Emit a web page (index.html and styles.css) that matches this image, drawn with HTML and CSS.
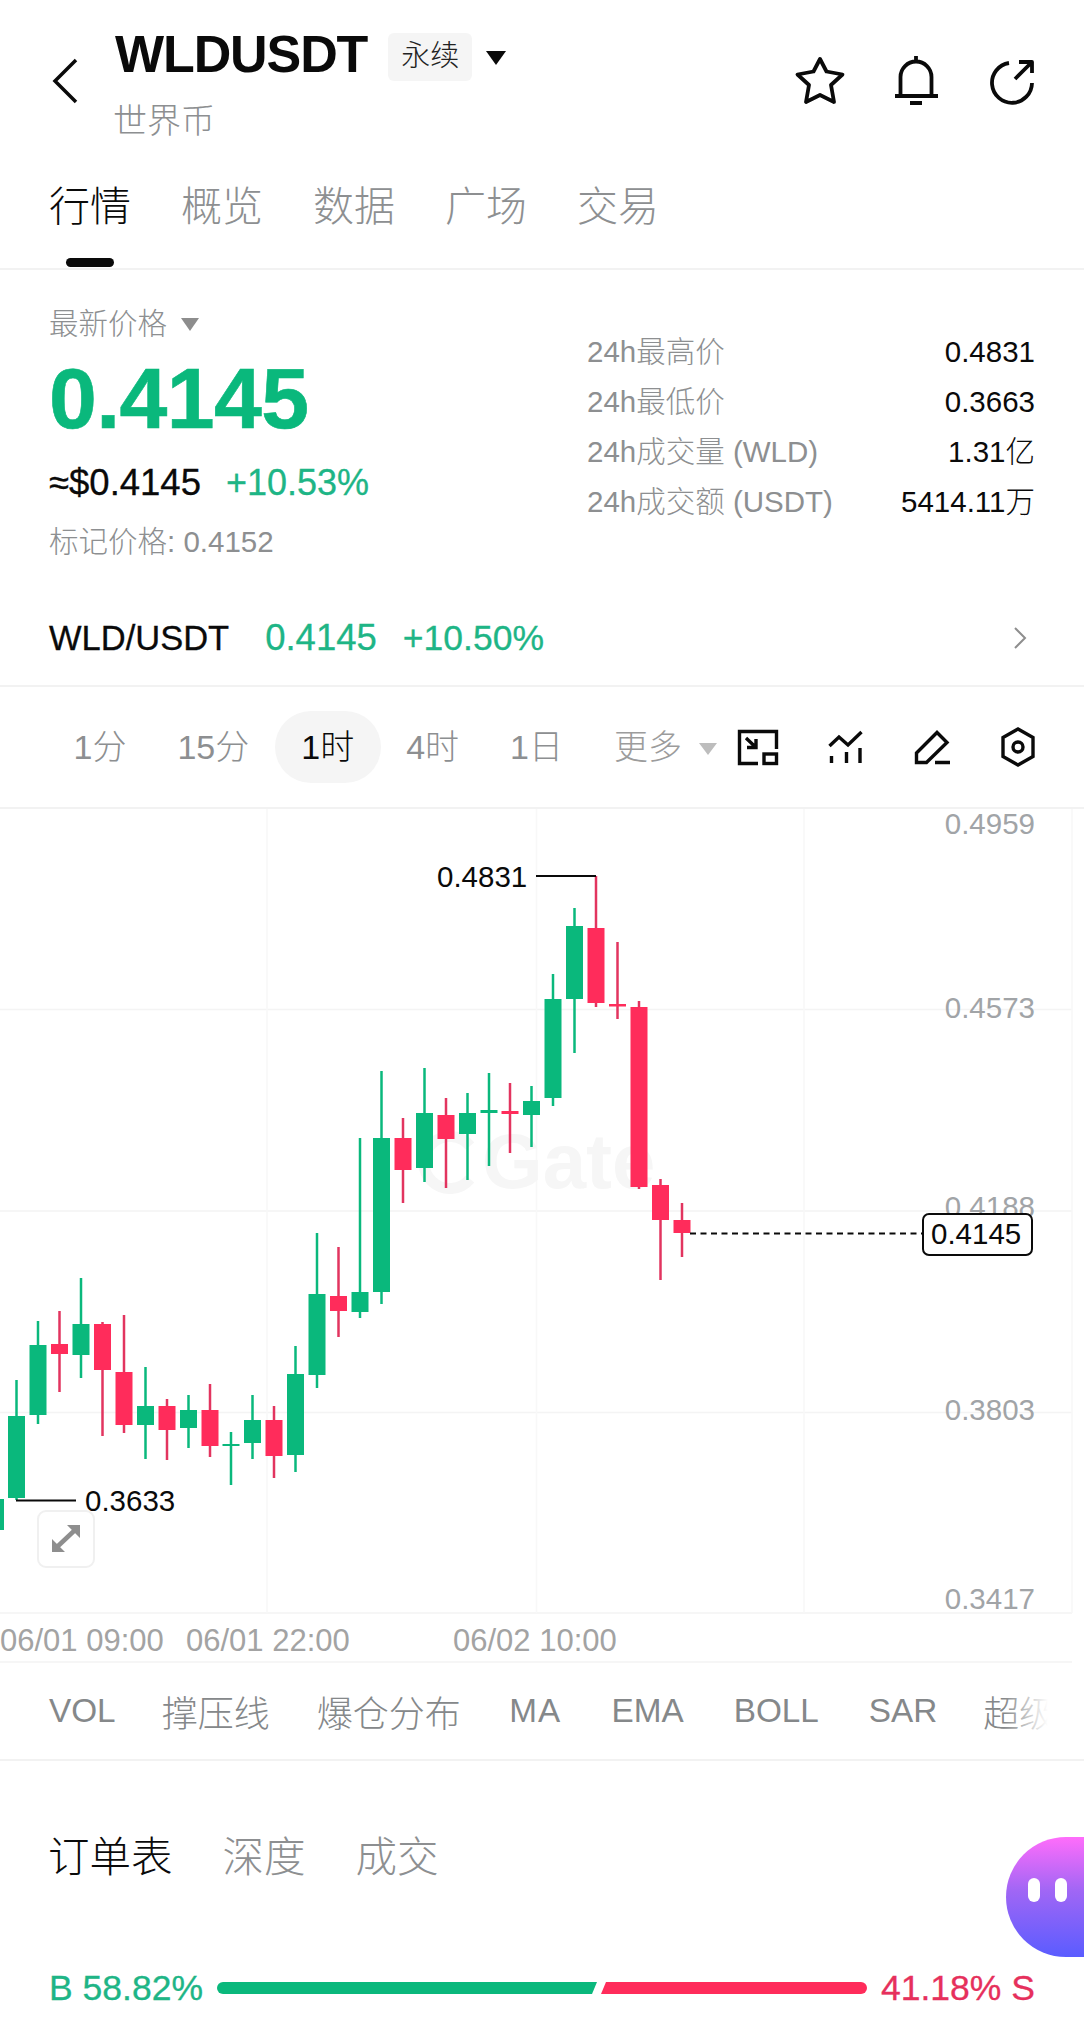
FILE: index.html
```html
<!DOCTYPE html>
<html lang="zh-CN">
<head>
    <meta charset="UTF-8">
    <meta name="viewport" content="width=device-width, initial-scale=1.0">
    <title>WLDUSDT 永续</title>
    <link rel="stylesheet" href="styles.css">
</head>
<body>
    <header class="topbar">
        <svg class="back" viewBox="0 0 26 46"><path d="M24 2 3 23l21 21"/></svg>
        <div class="pair">
            <div class="pair-line">
                <h1>WLDUSDT</h1>
                <span class="badge">永续</span>
                <span class="caret caret-dark"></span>
            </div>
            <p class="pair-name">世界币</p>
        </div>
        <div class="top-icons">
            <svg class="icon" viewBox="0 0 50 50"><path d="M25 3l6.5 12.5 16 3L36 29l3 17-14-7-14 7 3-17L2.500 18.500l16-3z"/></svg>
            <svg class="icon" viewBox="0 0 50 50"><path d="M9.500 40V21a15.500 15.500 0 0 1 31 0v19M4 40h43M25 0v5M19 47h12"/></svg>
            <svg class="icon" viewBox="0 0 50 50"><path d="M22 7a20 20 0 1 0 23 20M28 23 45 6M32 6h13v11"/></svg>
        </div>
    </header>

    <nav class="tabs">
        <a class="tab active">行情</a>
        <a class="tab">概览</a>
        <a class="tab">数据</a>
        <a class="tab">广场</a>
        <a class="tab">交易</a>
    </nav>

    <section class="stats">
        <div class="stats-left">
            <div class="price-label">最新价格 <span class="caret caret-grey"></span></div>
            <div class="price">0.4145</div>
            <div class="price-sub"><span class="usd">≈$0.4145</span><span class="change">+10.53%</span></div>
            <div class="mark">标记价格: 0.4152</div>
        </div>
        <dl class="stats-right">
            <div class="stat"><dt>24h最高价</dt><dd>0.4831</dd></div>
            <div class="stat"><dt>24h最低价</dt><dd>0.3663</dd></div>
            <div class="stat"><dt>24h成交量 (WLD)</dt><dd>1.31亿</dd></div>
            <div class="stat"><dt>24h成交额 (USDT)</dt><dd>5414.11万</dd></div>
        </dl>
    </section>

    <section class="spot">
        <span class="spot-name">WLD/USDT</span>
        <span class="spot-price">0.4145</span>
        <span class="spot-change">+10.50%</span>
        <svg class="spot-arrow" viewBox="0 0 14 24"><path d="M2 2l10 10L2 22"/></svg>
    </section>

    <section class="toolbar">
        <div class="frames">
            <a class="frame">1分</a>
            <a class="frame">15分</a>
            <a class="frame active"><b>1</b>时</a>
            <a class="frame">4时</a>
            <a class="frame">1日</a>
            <a class="frame more">更多<span class="caret caret-light"></span></a>
        </div>
        <div class="tools">
            <svg class="tool tool-resize" viewBox="0 0 42 37"><path d="M39.500 20V2.500h-37v32H21M9 9l10 9.500M19 10v8.500h-9"/><rect x="27" y="25" width="12.500" height="9.500"/></svg>
            <svg class="tool tool-indicator" viewBox="0 0 36 34"><path d="M1.500 16 11 7l9 8L33.500 2M3.500 26v7M18.500 22v11M32 18v15"/></svg>
            <svg class="tool tool-draw" viewBox="0 0 38 37"><path d="M3.500 33.500V24L24 3.500l10 10-20.500 20zM22 33.500h15"/></svg>
            <svg class="tool tool-settings" viewBox="0 0 36 40"><path d="M18 2l15 8.500v19L18 38 3 29.500v-19z"/><circle cx="18" cy="20" r="5"/></svg>
        </div>
    </section>

    <!-- viewBox uses page coordinates so candles can be read straight off the chart -->
    <svg class="chart" viewBox="0 809 1084 854">
        <g class="grid">
            <path d="M0 1009.500H1072M0 1211H1072M0 1412.500H1072M0 1613H1072M0 1662H1072"/>
            <path class="grid-v" d="M267 809V1613M536.500 809V1613M804 809V1613M1072 809V1613"/>
        </g>

        <g class="watermark">
            <path class="watermark-ring" d="M470 1146a26 26 0 1 0 0 33"/>
            <text x="482" y="1188">Gate</text>
        </g>

        <text class="axis" x="1035" y="833.500">0.4959</text>
        <text class="axis" x="1035" y="1017.500">0.4573</text>
        <text class="axis" x="1035" y="1217">0.4188</text>
        <text class="axis" x="1035" y="1419.500">0.3803</text>
        <text class="axis" x="1035" y="1608.500">0.3417</text>

        <text class="date" x="0" y="1651">06/01 09:00</text>
        <text class="date" x="186" y="1651">06/01 22:00</text>
        <text class="date" x="453" y="1651">06/02 10:00</text>

        <g class="up">
            <rect x="-13" y="1499" width="17" height="31"/>
            <path d="M16.500 1380V1500"/><rect x="8" y="1416" width="17" height="82"/>
            <path d="M38 1321V1424"/><rect x="29.500" y="1345" width="17" height="70"/>
            <path d="M81 1278V1378"/><rect x="72.500" y="1324" width="17" height="31"/>
            <path d="M145.500 1367V1459"/><rect x="137" y="1406" width="17" height="19"/>
            <path d="M188.500 1395V1448"/><rect x="180" y="1410" width="17" height="18"/>
            <path d="M231 1432V1485"/><rect x="222.500" y="1444" width="17" height="2"/>
            <path d="M252.500 1395V1459"/><rect x="244" y="1420" width="17" height="23"/>
            <path d="M295.500 1346V1472"/><rect x="287" y="1374" width="17" height="81"/>
            <path d="M317 1233V1388"/><rect x="308.500" y="1294" width="17" height="81"/>
            <path d="M360 1138V1318"/><rect x="351.500" y="1292" width="17" height="20"/>
            <path d="M381.500 1071V1304"/><rect x="373" y="1138" width="17" height="154"/>
            <path d="M424.500 1068V1182"/><rect x="416" y="1113" width="17" height="55"/>
            <path d="M467.500 1093V1180"/><rect x="459" y="1113" width="17" height="21"/>
            <path d="M489 1073V1166"/><rect x="480.500" y="1110" width="17" height="3"/>
            <path d="M531.500 1086V1147"/><rect x="523" y="1101" width="17" height="14"/>
            <path d="M553 974V1106"/><rect x="544.500" y="999" width="17" height="99"/>
            <path d="M574.500 908V1053"/><rect x="566" y="926" width="17" height="73"/>
        </g>
        <g class="down">
            <path d="M59.500 1311V1392"/><rect x="51" y="1344" width="17" height="10"/>
            <path d="M102.500 1322V1436"/><rect x="94" y="1324" width="17" height="46"/>
            <path d="M124 1315V1433"/><rect x="115.500" y="1372" width="17" height="53"/>
            <path d="M167 1399V1460"/><rect x="158.500" y="1406" width="17" height="24"/>
            <path d="M210 1384V1457"/><rect x="201.500" y="1410" width="17" height="36"/>
            <path d="M274 1406V1478"/><rect x="265.500" y="1420" width="17" height="36"/>
            <path d="M338.500 1247V1337"/><rect x="330" y="1296" width="17" height="15"/>
            <path d="M403 1118V1203"/><rect x="394.500" y="1138" width="17" height="32"/>
            <path d="M446 1098V1188"/><rect x="437.500" y="1115" width="17" height="24"/>
            <path d="M510 1083V1153"/><rect x="501.500" y="1111" width="17" height="3"/>
            <path d="M596 876V1007"/><rect x="587.500" y="928" width="17" height="75"/>
            <path d="M617.500 942V1019"/><rect x="609" y="1004" width="17" height="2.500"/>
            <path d="M639 1001V1189"/><rect x="630.500" y="1007" width="17" height="180"/>
            <path d="M660.500 1179V1280"/><rect x="652" y="1185" width="17" height="35"/>
            <path d="M682 1203V1257"/><rect x="673.500" y="1220" width="17" height="13"/>
        </g>

        <path class="marker" d="M536 876H596M16 1500.500H76"/>
        <text class="marker-text" x="437" y="886.500">0.4831</text>
        <text class="marker-text" x="85" y="1510.500">0.3633</text>

        <path class="last-line" d="M690 1233.500H922"/>
        <rect class="last-tag" x="923" y="1214" width="109" height="41" rx="6"/>
        <text class="marker-text" x="931" y="1243.500">0.4145</text>

        <rect class="expand" x="38" y="1511" width="56" height="56" rx="8"/>
        <path class="expand-line" d="M57 1547 75 1530"/>
        <path class="expand-head" d="M67 1525H80V1538zM52 1539V1552H65z"/>
    </svg>

    <section class="indicators">
        <span class="vol">VOL</span>
        <span class="cn">撑压线</span>
        <span class="cn">爆仓分布</span>
        <span class="ma">MA</span>
        <span>EMA</span>
        <span>BOLL</span>
        <span>SAR</span>
        <span class="cn last">超级趋势</span>
        <div class="indicators-fade"></div>
    </section>

    <section class="book">
        <div class="book-tabs">
            <a class="book-tab active">订单表</a>
            <a class="book-tab">深度</a>
            <a class="book-tab">成交</a>
        </div>
        <div class="ratio">
            <span class="ratio-buy">B 58.82%</span>
            <div class="ratio-bar">
                <div class="ratio-green"></div>
                <div class="ratio-red"></div>
            </div>
            <span class="ratio-sell">41.18% S</span>
        </div>
    </section>

    <div class="assistant">
        <span class="eye"></span>
        <span class="eye"></span>
    </div>
</body>
</html>
```

FILE: styles.css
```css
/* Couleurs */
:root {
  --green: #0ab87c;
  --green-text: #1eb586;
  --red: #ff2c5b;
  --red-text: #e6305c;
  --grey: #8d8f91;
  --line: #f2f2f2;
}
* {
  box-sizing: border-box;
}
html, body {
  margin: 0;
  padding: 0;
}
body {
  position: relative;
  width: 1084px;
  height: 2028px;
  overflow: hidden;
  background: #fff;
  color: #0a0a0a;
  font-family: "Liberation Sans", "Noto Sans CJK SC", sans-serif;
  font-weight: 300;
}
a {
  display: block;
  white-space: nowrap;
}

/* Triangles */
.caret {
  display: inline-block;
  width: 0;
  height: 0;
  border-left: 10px solid transparent;
  border-right: 10px solid transparent;
}
.caret-dark {
  border-top: 14px solid #0a0a0a;
}
.caret-grey {
  margin-left: 6px;
  border-left-width: 9px;
  border-right-width: 9px;
  border-top: 13px solid #8d8d8d;
  vertical-align: 3px;
}
.caret-light {
  margin-left: 17px;
  border-left-width: 9px;
  border-right-width: 9px;
  border-top: 12px solid #bdbdbd;
  vertical-align: 4px;
}

/* En-tete */
.topbar {
  display: flex;
  height: 140px;
  padding: 24px 47px 0 52px;
}
.back {
  width: 26px;
  height: 46px;
  margin-top: 34px;
  fill: none;
  stroke: #0a0a0a;
  stroke-width: 3.5;
}
.pair {
  margin-left: 37px;
}
.pair-line {
  display: flex;
  align-items: center;
  height: 60px;
}
h1 {
  margin: 0;
  font-size: 52px;
  font-weight: 700;
  letter-spacing: -1.1px;
}
.badge {
  width: 84px;
  height: 48px;
  margin: 5px 0 0 21px;
  border-radius: 6px;
  background: #f5f5f5;
  font-size: 29px;
  line-height: 46px;
  text-align: center;
  color: #222;
}
.pair-line .caret {
  margin: 7px 0 0 14px;
}
.pair-name {
  margin: 17px 0 0 -2px;
  font-size: 34px;
  line-height: 40px;
  color: var(--grey);
}
.top-icons {
  display: flex;
  gap: 46px;
  margin: 32px 0 0 auto;
}
.icon {
  width: 50px;
  height: 50px;
  overflow: visible;
  fill: none;
  stroke: #0a0a0a;
  stroke-width: 3.8;
  stroke-linejoin: round;
}

/* Onglets */
.tabs {
  display: flex;
  gap: 50px;
  height: 130px;
  padding: 42px 0 0 49px;
  border-bottom: 2px solid var(--line);
}
.tab {
  position: relative;
  width: 82px;
  font-size: 41px;
  line-height: 50px;
  color: var(--grey);
}
.tab.active {
  color: #0a0a0a;
}
.tab.active::after {
  content: "";
  position: absolute;
  left: 17px;
  top: 76px;
  width: 48px;
  height: 9px;
  border-radius: 5px;
  background: #0a0a0a;
}

/* Prix */
.stats {
  display: flex;
  height: 321px;
  padding: 34px 49px 0 49px;
}
.stats-left {
  width: 538px;
}
.price-label {
  font-size: 29.5px;
  line-height: 40px;
  color: var(--grey);
}
.price {
  margin-top: 9px;
  font-size: 86px;
  font-weight: 700;
  line-height: 90px;
  letter-spacing: -0.6px;
  color: var(--green);
  -webkit-text-stroke: 0.6px var(--green);
}
.price-sub {
  display: flex;
  gap: 25px;
  margin-top: 20px;
  line-height: 40px;
  -webkit-text-stroke: 0.3px;
}
.usd {
  font-size: 36.5px;
}
.change {
  font-size: 36px;
  color: var(--green-text);
}
.mark {
  margin-top: 19px;
  font-size: 29.5px;
  line-height: 40px;
  color: var(--grey);
}
.stats-right {
  flex: 1;
  margin: 23px 0 0;
}
.stat {
  display: flex;
  justify-content: space-between;
  height: 50px;
  font-size: 29.5px;
  line-height: 50px;
}
dt {
  color: var(--grey);
}
dd {
  margin: 0;
}

/* Spot */
.spot {
  display: flex;
  align-items: center;
  height: 96px;
  padding: 0 57px 0 49px;
  border-bottom: 2px solid var(--line);
  -webkit-text-stroke: 0.3px;
}
.spot-name {
  font-size: 34.5px;
}
.spot-price {
  margin-left: 36px;
  font-size: 36.5px;
  color: var(--green-text);
}
.spot-change {
  margin-left: 26px;
  font-size: 35.5px;
  color: var(--green-text);
}
.spot-arrow {
  width: 14px;
  height: 24px;
  margin-left: auto;
  fill: none;
  stroke: #8e8e8e;
  stroke-width: 2;
}

/* Periodes et outils */
.toolbar {
  display: flex;
  align-items: center;
  height: 122px;
  padding: 0 48px 0 48px;
  border-bottom: 2px solid var(--line);
}
.frames {
  display: flex;
  align-items: center;
}
.frame {
  height: 72px;
  padding: 0 25.5px;
  border-radius: 36px;
  font-size: 34px;
  line-height: 72px;
  color: var(--grey);
}
.frame.active {
  padding: 0 26.5px;
  background: #f5f5f5;
  color: #0a0a0a;
}
.frame.more {
  padding-right: 0;
  color: #9c9c9c;
}
.tools {
  display: flex;
  align-items: center;
  gap: 49px;
  margin-left: auto;
}
.tool {
  fill: none;
  stroke: #0a0a0a;
  stroke-width: 3.4;
}
.tool-resize {
  width: 42px;
  height: 37px;
}
.tool-indicator {
  width: 36px;
  height: 34px;
}
.tool-draw {
  width: 38px;
  height: 37px;
}
.tool-settings {
  width: 36px;
  height: 40px;
}

/* Graphique */
.chart {
  display: block;
  width: 1084px;
  height: 854px;
  font-family: "Liberation Sans", sans-serif;
}
.grid path {
  fill: none;
  stroke: #f4f4f4;
  stroke-width: 1.5;
}
.grid .grid-v {
  stroke: #f8f8f8;
}
.watermark text {
  font-size: 78px;
  font-weight: 700;
  fill: #f6f6f6;
}
.watermark-ring {
  fill: none;
  stroke: #f6f6f6;
  stroke-width: 11;
}
.axis {
  font-size: 29.5px;
  text-anchor: end;
  fill: #a1a4a7;
}
.date {
  font-size: 31px;
  fill: #a3a3a3;
}
.up rect {
  fill: var(--green);
}
.up path {
  stroke: var(--green);
  stroke-width: 2.5;
}
.down rect {
  fill: var(--red);
}
.down path {
  stroke: #e2345f;
  stroke-width: 2.5;
}
.marker {
  stroke: #0a0a0a;
  stroke-width: 2;
}
.marker-text {
  font-size: 29.5px;
  fill: #0a0a0a;
}
.last-line {
  stroke: #0a0a0a;
  stroke-width: 2;
  stroke-dasharray: 6 4.5;
}
.last-tag {
  fill: #fff;
  stroke: #0a0a0a;
  stroke-width: 2;
}
.expand {
  fill: #fff;
  stroke: #f0f0f0;
  stroke-width: 2;
}
.expand-line {
  stroke: #8e8e8e;
  stroke-width: 4.5;
}
.expand-head {
  fill: #8e8e8e;
}

/* Indicateurs */
.indicators {
  position: relative;
  display: flex;
  align-items: center;
  gap: 50px;
  height: 98px;
  padding-left: 49px;
  overflow: hidden;
  border-bottom: 2px solid var(--line);
  font-size: 33.3px;
  white-space: nowrap;
  color: #85888a;
}
.indicators .vol {
  margin-right: -2.5px;
}
.indicators .cn {
  margin: 0 -1.5px;
  font-size: 36px;
}
.indicators .ma {
  letter-spacing: 1.2px;
}
.indicators .last {
  margin-left: -4px;
}
.indicators-fade {
  position: absolute;
  top: 0;
  bottom: 0;
  right: 0;
  width: 80px;
  background: linear-gradient(to right, rgba(255,255,255,0) 0, #fff 55%);
}

/* Carnet d'ordres */
.book {
  padding: 72px 0 0 48px;
}
.book-tabs {
  display: flex;
  gap: 50px;
  font-size: 41.5px;
  line-height: 50px;
  color: var(--grey);
}
.book-tab.active {
  color: #0a0a0a;
}
.ratio {
  display: flex;
  align-items: center;
  margin-top: 83px;
  padding-left: 1px;
  font-size: 35.5px;
  line-height: 44px;
  white-space: nowrap;
  -webkit-text-stroke: 0.3px;
}
.ratio-buy {
  width: 168px;
  color: var(--green-text);
}
.ratio-bar {
  display: flex;
  gap: 4px;
  width: 650px;
  height: 12px;
}
.ratio-green {
  width: 380px;
  border-radius: 6px 0 0 6px;
  background: var(--green);
  clip-path: polygon(0 0, 100% 0, calc(100% - 5px) 100%, 0 100%);
}
.ratio-red {
  width: 266px;
  border-radius: 0 6px 6px 0;
  background: var(--red);
  clip-path: polygon(5px 0, 100% 0, 100% 100%, 0 100%);
}
.ratio-sell {
  margin-left: 14px;
  color: var(--red-text);
}

/* Bouton flottant */
.assistant {
  position: absolute;
  top: 1837px;
  right: 0;
  display: flex;
  align-items: center;
  gap: 15px;
  width: 78px;
  height: 120px;
  padding: 0 0 14px 22px;
  border-radius: 60px 0 0 60px;
  background: linear-gradient(to bottom, #ff6dfb 0, #a066f5 45%, #5a5cff 100%);
}
.eye {
  width: 12px;
  height: 24px;
  border-radius: 6px;
  background: #fff;
}
```
